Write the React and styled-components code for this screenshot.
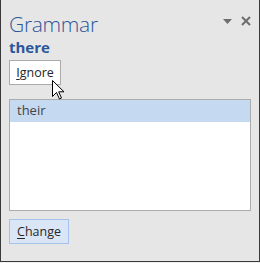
import React from 'react';
import styled, { createGlobalStyle } from 'styled-components';

const GlobalStyle = createGlobalStyle`
    html, body {
        margin: 0;
        padding: 0;
        background: #f0f0f0;
    }
    * {
        box-sizing: border-box;
    }
`;

const Panel = styled.div`
    position: relative;
    width: 260px;
    height: 262px;
    background: #e6e6e6;
    border-left: 1px solid #3a3a3a;
    border-right: 1px solid #3a3a3a;
    border-bottom: 1px solid #3a3a3a;
    padding: 10px 0 0 8px;
    font-family: "Open Sans", "Noto Sans", sans-serif;
    color: #333;
`;

const Header = styled.div`
    display: flex;
    justify-content: space-between;
    align-items: flex-start;
`;

const Title = styled.div`
    font-size: 21px;
    font-weight: 300;
    line-height: 28px;
    color: #2b579a;
    letter-spacing: -0.3px;
`;

const HeaderIcons = styled.div`
    display: flex;
    align-items: center;
    gap: 9px;
    padding: 6px 8px 0 0;
`;

const Word = styled.div`
    font-size: 15px;
    font-weight: 700;
    line-height: 18px;
    color: #2b579a;
`;

const ButtonRow = styled.div`
    position: relative;
    margin-top: 4px;
    height: 25px;
`;

const Button = styled.button`
    display: flex;
    align-items: center;
    justify-content: center;
    width: ${(p) => p.width}px;
    height: 25px;
    padding: 0 0 1px;
    font-family: inherit;
    font-size: 12.5px;
    color: #262626;
    background: ${(p) => (p.primary ? '#dae6f6' : '#ffffff')};
    border: 1px solid ${(p) => (p.primary ? '#a5c2ec' : '#ababab')};
    cursor: default;
`;

const Key = styled.span`
    text-decoration: underline;
    text-underline-offset: 2px;
`;

const Cursor = styled.svg`
    position: absolute;
    left: 43px;
    top: 20px;
`;

const List = styled.div`
    margin-top: 14px;
    width: 242px;
    height: 112px;
    background: #ffffff;
    border: 1px solid #ababab;
`;

const Row = styled.div`
    height: 22px;
    padding-left: 7px;
    font-size: 13px;
    line-height: 21px;
    color: #444;
    background: ${(p) => (p.selected ? '#c5d9f1' : 'transparent')};
`;

const Footer = styled.div`
    margin-top: 8px;
`;

export default function App() {
    return (
        <>
            <GlobalStyle />
            <Panel>
                <Header>
                    <Title>Grammar</Title>
                    <HeaderIcons>
                        <svg width="9" height="5" viewBox="0 0 9 5">
                            <path d="M0 0 H9 L4.5 5 Z" fill="#6d6d6d" />
                        </svg>
                        <svg width="10" height="10" viewBox="0 0 10 10">
                            <path d="M1 1 L9 9 M9 1 L1 9" stroke="#6d6d6d" strokeWidth="2" />
                        </svg>
                    </HeaderIcons>
                </Header>
                <Word>there</Word>
                <ButtonRow>
                    <Button width={52}>
                        <span><Key>I</Key>gnore</span>
                    </Button>
                    <Cursor width="13" height="20" viewBox="0 0 13 20">
                        <path
                            d="M0.5 0.5 V16.5 L4.5 12.5 L7.5 19 L9.5 18 L6.7 11.8 H12 Z"
                            fill="#ffffff"
                            stroke="#000000"
                            strokeWidth="1"
                            strokeLinejoin="miter"
                        />
                    </Cursor>
                </ButtonRow>
                <List>
                    <Row selected>their</Row>
                </List>
                <Footer>
                    <Button width={60} primary>
                        <span><Key>C</Key>hange</span>
                    </Button>
                </Footer>
            </Panel>
        </>
    );
}
